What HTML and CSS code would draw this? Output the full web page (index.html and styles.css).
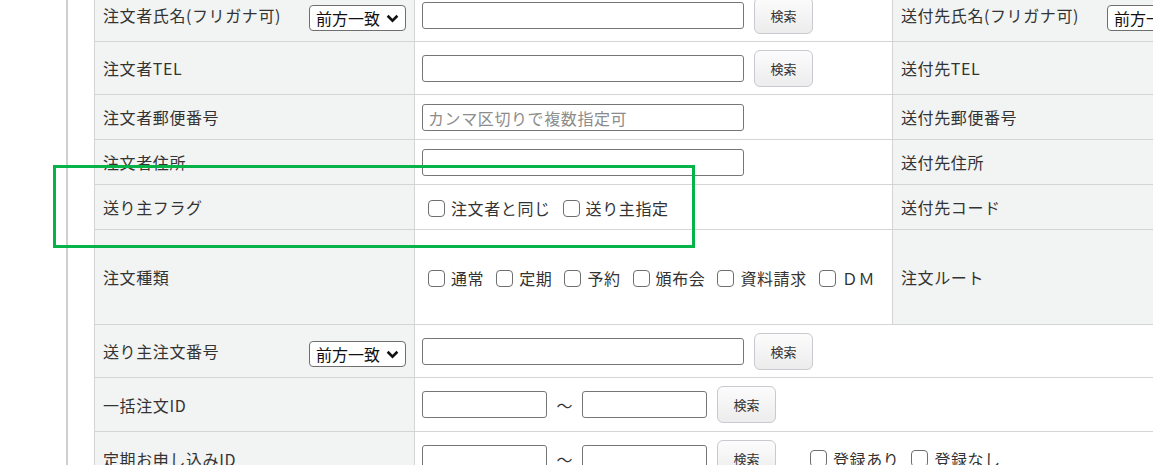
FILE: index.html
```html
<!DOCTYPE html>
<html lang="ja">
<head>
    <meta charset="UTF-8">
    <title>受注検索</title>
    <link rel="stylesheet" href="styles.css">
</head>
<body>
    <div class="page">
        <div class="side"></div>
        <div class="main">
            <table class="search">
                <colgroup>
                    <col class="c-head"><col class="c-body"><col class="c-head"><col class="c-body">
                </colgroup>
                <tr class="h53">
                    <th><div class="head-flex"><span>注文者氏名(フリガナ可)</span><span class="sel-wrap"><select class="sel"><option>前方一致</option></select><svg class="chev" viewBox="0 0 12 8"><path d="M1.5 1.5 L6 6 L10.5 1.5" fill="none" stroke="#111" stroke-width="2.4"/></svg></span></div></th>
                    <td><input class="txt" type="text"><button class="btn">検索</button></td>
                    <th><div class="head-flex"><span>送付先氏名(フリガナ可)</span><span class="sel-wrap"><select class="sel"><option>前方一致</option></select><svg class="chev" viewBox="0 0 12 8"><path d="M1.5 1.5 L6 6 L10.5 1.5" fill="none" stroke="#111" stroke-width="2.4"/></svg></span></div></th>
                    <td><input class="txt" type="text"><button class="btn">検索</button></td>
                </tr>
                <tr class="h53">
                    <th>注文者TEL</th>
                    <td><input class="txt" type="text"><button class="btn">検索</button></td>
                    <th>送付先TEL</th>
                    <td><input class="txt" type="text"><button class="btn">検索</button></td>
                </tr>
                <tr class="h45">
                    <th>注文者郵便番号</th>
                    <td><input class="txt" type="text" placeholder="カンマ区切りで複数指定可"></td>
                    <th>送付先郵便番号</th>
                    <td><input class="txt" type="text" placeholder="カンマ区切りで複数指定可"></td>
                </tr>
                <tr class="h45">
                    <th>注文者住所</th>
                    <td><input class="txt" type="text"></td>
                    <th>送付先住所</th>
                    <td><input class="txt" type="text"></td>
                </tr>
                <tr class="h45">
                    <th>送り主フラグ</th>
                    <td>
                        <span class="chks">
                            <label class="chk"><input type="checkbox">注文者と同じ</label>
                            <label class="chk"><input type="checkbox">送り主指定</label>
                        </span>
                    </td>
                    <th>送付先コード</th>
                    <td><input class="txt" type="text"></td>
                </tr>
                <tr class="h95">
                    <th>注文種類</th>
                    <td>
                        <span class="chks">
                            <label class="chk"><input type="checkbox">通常</label>
                            <label class="chk"><input type="checkbox">定期</label>
                            <label class="chk"><input type="checkbox">予約</label>
                            <label class="chk"><input type="checkbox">頒布会</label>
                            <label class="chk"><input type="checkbox">資料請求</label>
                            <label class="chk"><input type="checkbox">ＤＭ</label>
                        </span>
                    </td>
                    <th>注文ルート</th>
                    <td></td>
                </tr>
                <tr class="h53">
                    <th><div class="head-flex"><span>送り主注文番号</span><span class="sel-wrap"><select class="sel"><option>前方一致</option></select><svg class="chev" viewBox="0 0 12 8"><path d="M1.5 1.5 L6 6 L10.5 1.5" fill="none" stroke="#111" stroke-width="2.4"/></svg></span></div></th>
                    <td colspan="3"><input class="txt" type="text"><button class="btn">検索</button></td>
                </tr>
                <tr class="h54">
                    <th>一括注文ID</th>
                    <td colspan="3"><input class="txt short" type="text"><span class="tilde">〜</span><input class="txt short" type="text"><button class="btn">検索</button></td>
                </tr>
                <tr class="h54">
                    <th>定期お申し込みID</th>
                    <td colspan="3">
                        <input class="txt short" type="text"><span class="tilde">〜</span><input class="txt short" type="text"><button class="btn">検索</button><span class="chks reg">
                            <label class="chk"><input type="checkbox">登録あり</label>
                            <label class="chk"><input type="checkbox">登録なし</label>
                        </span>
                    </td>
                </tr>
            </table>
        </div>
    </div>
    <div class="mark"></div>
</body>
</html>
```

FILE: styles.css
```css
body {
    margin: 0;
    font-family: "Noto Sans CJK JP", "Noto Sans", sans-serif;
    font-size: 16px;
    letter-spacing: 0.6px;
    color: #333;
    background: #fff;
    overflow: hidden;
}
.page {
    display: flex;
    height: 100vh;
}
.side {
    width: 66px;
    flex: none;
    border-right: 2px solid #cfcfcf;
}
.main {
    padding-left: 26px;
    margin-top: -12px;
}
.search {
    border-collapse: collapse;
    table-layout: fixed;
    width: 1596px;
}
.c-head {
    width: 320px;
}
.c-body {
    width: 478px;
}
.search th,
.search td {
    border: 1px solid #d4d4d4;
    padding: 0 7px;
    vertical-align: middle;
    text-align: left;
    white-space: nowrap;
}
.search th {
    background: #f2f3f3;
    font-weight: normal;
    padding: 0 8px;
}
.h53 { height: 53px; }
.h54 { height: 54px; }
.h45 { height: 45px; }
.h95 { height: 95px; }
.head-flex {
    display: flex;
    justify-content: space-between;
    align-items: center;
}
.sel-wrap {
    position: relative;
    display: inline-block;
    margin-top: 5px;
}
.sel {
    appearance: none;
    -webkit-appearance: none;
    width: 97px;
    height: 26px;
    border: 1px solid #6f6f6f;
    border-radius: 4px;
    background: #fff;
    font-family: inherit;
    font-size: 16px;
    letter-spacing: 0;
    color: #111;
    padding: 0 0 0 6px;
    line-height: 24px;
}
.chev {
    position: absolute;
    right: 7px;
    top: 9px;
    width: 13px;
    height: 9px;
    pointer-events: none;
}
.txt {
    box-sizing: border-box;
    width: 322px;
    height: 27px;
    border: 1px solid #767676;
    border-radius: 3px;
    padding: 0 5px;
    font-family: inherit;
    font-size: 16px;
    letter-spacing: 0.6px;
    vertical-align: middle;
    margin: 0;
}
.txt::placeholder {
    color: #8c8c8c;
}
.txt.short {
    width: 125px;
}
.tilde {
    display: inline-block;
    width: 35px;
    text-align: center;
    vertical-align: middle;
    letter-spacing: 0;
    color: #333;
}
.btn {
    box-sizing: border-box;
    width: 59px;
    height: 37px;
    margin: 0 0 0 10px;
    border: 1px solid #c9c9d0;
    border-radius: 6px;
    background: linear-gradient(#fcfcfc, #ececec);
    font-family: inherit;
    font-size: 13px;
    letter-spacing: 0;
    color: #333;
    vertical-align: middle;
}
.chks {
    display: inline-flex;
    align-items: center;
    gap: 12px;
    margin-left: 6px;
    vertical-align: middle;
}
.chk {
    display: inline-flex;
    align-items: center;
}
.chk input {
    appearance: none;
    -webkit-appearance: none;
    box-sizing: border-box;
    width: 17px;
    height: 17px;
    margin: 0 6px 0 0;
    border: 1px solid #6f6f6f;
    border-radius: 4px;
    background: #fff;
}
.chks.reg {
    margin-left: 34px;
}
.mark {
    position: absolute;
    left: 53px;
    top: 165px;
    width: 642px;
    height: 83px;
    box-sizing: border-box;
    border: 3px solid #06b348;
}
```
